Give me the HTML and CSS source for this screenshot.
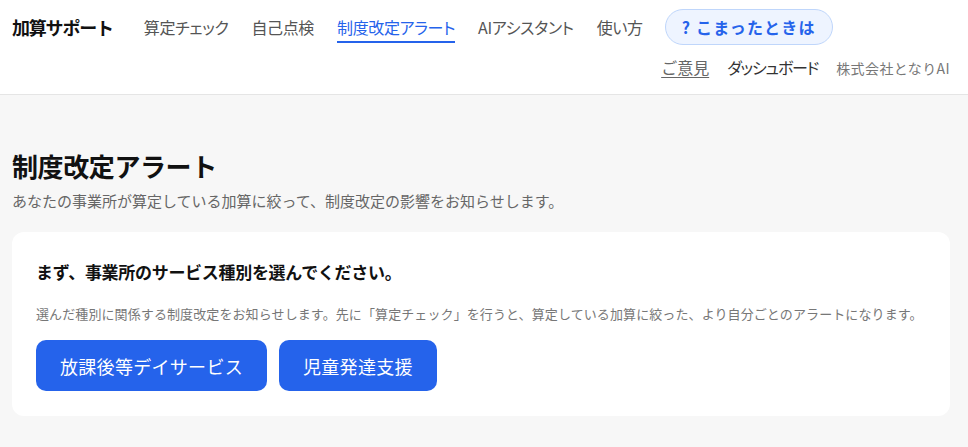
FILE: index.html
```html
<!DOCTYPE html>
<html lang="ja">
<head>
<meta charset="UTF-8">
<title>制度改定アラート | 加算サポート</title>
<link rel="stylesheet" href="styles.css">
</head>
<body>

<header class="site-header">
  <div class="header-main">
    <a class="logo" href="#">加算サポート</a>
    <nav class="main-nav">
      <a href="#">算定チェック</a>
      <a href="#">自己点検</a>
      <a href="#" class="active">制度改定アラート</a>
      <a href="#">AIアシスタント</a>
      <a href="#">使い方</a>
    </nav>
    <a class="help-pill" href="#">? こまったときは</a>
  </div>
  <div class="header-sub">
    <a href="#" class="feedback">ご意見</a>
    <a href="#" class="dashboard">ダッシュボード</a>
    <span class="company">株式会社となりAI</span>
  </div>
</header>

<main class="page">
  <h1 class="page-title">制度改定アラート</h1>
  <p class="page-lead">あなたの事業所が算定している加算に絞って、制度改定の影響をお知らせします。</p>

  <section class="card">
    <h2>まず、事業所のサービス種別を選んでください。</h2>
    <p class="card-note">選んだ種別に関係する制度改定をお知らせします。先に「算定チェック」を行うと、算定している加算に絞った、より自分ごとのアラートになります。</p>
    <div class="choices">
      <button type="button" class="choice">放課後等デイサービス</button>
      <button type="button" class="choice">児童発達支援</button>
    </div>
  </section>
</main>

</body>
</html>
```

FILE: styles.css
```css
body {
  font-family: "Noto Sans CJK JP", "Noto Sans", sans-serif;
  background-color: #f7f7f7;
  margin: 0;
  color: #222;
}
a {
  text-decoration: none;
  color: inherit;
}
.site-header {
  background-color: #fff;
  border-bottom: 1px solid #e5e5e5;
  padding: 9px 18px 12px 12px;
  height: 73px;
}
.header-main {
  display: flex;
  align-items: center;
}
.logo {
  font-size: 18px;
  font-weight: bold;
  color: #111;
  letter-spacing: -1.2px;
  margin-right: 31px;
}
.main-nav {
  display: flex;
  gap: 23px;
}
.main-nav a {
  font-size: 16px;
  font-feature-settings: "palt";
  letter-spacing: -0.35px;
  color: #555;
  padding: 3px 0 2px;
  border-bottom: 2px solid transparent;
}
.main-nav a.active {
  color: #2563eb;
  border-bottom-color: #2563eb;
}
.help-pill {
  margin-left: 22px;
  padding: 5px 16px;
  border: 1px solid #bfd6fb;
  background-color: #eef4ff;
  border-radius: 18px;
  color: #2563eb;
  font-weight: bold;
  font-size: 16px;
  letter-spacing: 1.2px;
}
.header-sub {
  display: flex;
  justify-content: flex-end;
  align-items: baseline;
  gap: 18px;
  margin-top: 10px;
}
.feedback {
  font-size: 16px;
  color: #666;
  text-decoration: underline;
  text-underline-offset: 3px;
}
.dashboard {
  font-size: 16px;
  color: #333;
  font-feature-settings: "palt";
  letter-spacing: -1.2px;
}
.company {
  font-size: 14px;
  color: #777;
  letter-spacing: 0.4px;
}
.page {
  padding: 52px 18px 30px 12px;
}
.page-title {
  font-size: 26px;
  margin: 0 0 6px;
  color: #111;
  letter-spacing: -0.4px;
}
.page-lead {
  font-size: 15px;
  color: #666;
  margin: 0 0 21px;
}
.card {
  background-color: #fff;
  border-radius: 12px;
  padding: 24px 24px 25px;
}
.card h2 {
  font-size: 17px;
  margin: 3px 0 20px;
  color: #111;
  letter-spacing: -0.3px;
}
.card-note {
  font-size: 13px;
  color: #777;
  letter-spacing: 0.1px;
  margin: 0 0 17px;
}
.choices {
  display: flex;
  gap: 12px;
}
.choice {
  font-family: inherit;
  background-color: #2563eb;
  color: #fff;
  border: none;
  border-radius: 10px;
  font-size: 18px;
  letter-spacing: 0.3px;
  padding: 0 24px;
  height: 51px;
  cursor: pointer;
}
```
